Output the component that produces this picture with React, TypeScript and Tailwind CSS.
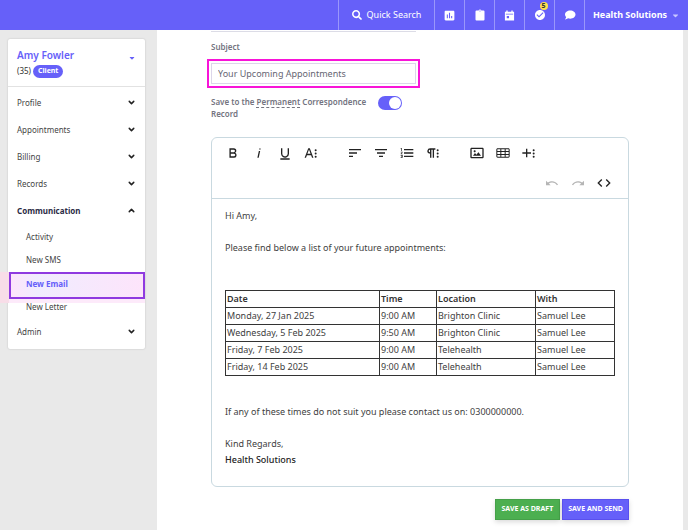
import React, { useState } from "react";
import { FaCaretDown, FaSearch } from "react-icons/fa";
import { MdAssessment, MdCheckCircle } from "react-icons/md";
import { ChevronDown, ChevronUp } from "lucide-react";

const DOTS =
  "M20.5,17.5a1.5,1.5,0,1,1-3,0a1.5,1.5,0,0,1,3,0ZM20.5,12.7a1.5,1.5,0,1,1-3,0a1.5,1.5,0,0,1,3,0ZM20.5,7.9a1.5,1.5,0,1,1-3,0a1.5,1.5,0,0,1,3,0Z";

const ICONS = {
  bold: "M15.25,11.8h0A3.68,3.68,0,0,0,17,9a3.93,3.93,0,0,0-3.86-4H6.65V19h7a3.74,3.74,0,0,0,3.7-3.78V15.1A3.64,3.64,0,0,0,15.25,11.8ZM8.65,7h4.2a2.09,2.09,0,0,1,2,1.3,2.09,2.09,0,0,1-1.37,2.61,2.23,2.23,0,0,1-.63.09H8.65Zm4.6,10H8.65V13h4.6a2.09,2.09,0,0,1,2,1.3,2.09,2.09,0,0,1-1.37,2.61A2.23,2.23,0,0,1,13.25,17Z",
  italic: "M11.76,9h2l-2.2,10h-2Zm1.68-4a1,1,0,1,0,1,1,1,1,0,0,0-1-1Z",
  underline:
    "M19,20v2H5V20Zm-3-6.785a4,4,0,0,1-5.74,3.4A3.75,3.75,0,0,1,8,13.085V5.005H6v8.21a6,6,0,0,0,8,5.44,5.851,5.851,0,0,0,4-5.65v-8H16Z",
  textMore:
    "M13.55,19h2.1L10.2,5H7.9L2.4,19h2.1l1.4-3.8h6.3ZM6.6,13.3L9,6.9l2.4,6.4Z" + DOTS,
  alignLeft: "M3,18h6v-2H3V18z M3,11v2h12v-2H3z M3,6v2h18V6H3z",
  alignCenter: "M9,18h6v-2H9V18z M6,11v2h12v-2H6z M3,6v2h18V6H3z",
  orderedList:
    "M2.5,16h2v.5h-1v1h1V18h-2v1h3V15h-3Zm1-7h1V5h-2V6h1Zm-1,2H4.3L2.5,13.1V14h3V13H3.7l1.8-2.1V10h-3Zm5-5V8h14V6Zm0,12h14V16H7.5Zm0-5h14V11H7.5Z",
  paragraph:
    "M7.682,5a4.11,4.11,0,0,0-4.07,3.18,4,4,0,0,0,3.11,4.725h0l.027.005a3.766,3.766,0,0,0,.82.09v6h2V7h2V19h2V7h2V5ZM5.532,9a2,2,0,0,1,2-2v4A2,2,0,0,1,5.532,9Z" +
    DOTS,
  image:
    "M14.2,11l3.8,5H6l3-3.9l2.1,2.7L14,11H14.2z M8.5,11c0.8,0,1.5-0.7,1.5-1.5S9.3,8,8.5,8S7,8.7,7,9.5C7,10.3,7.7,11,8.5,11z M22,6v12c0,1.1-0.9,2-2,2H4c-1.1,0-2-0.9-2-2V6c0-1.1,0.9-2,2-2h16C21.1,4,22,4.8,22,6z M20,8.8V6H4v12h16V8.8z",
  table:
    "M20,5H4C2.9,5,2,5.9,2,7v10c0,1.1,0.9,2,2,2h16c1.1,0,2-0.9,2-2V7C22,5.9,21.1,5,20,5z M9.5,13.5v-3h5v3H9.5z M14.5,15v2.5h-5V15H14.5z M9.5,9V6.5h5V9H9.5z M3.5,7c0-0.3,0.2-0.5,0.5-0.5h4V9H3.5V7z M3.5,10.5H8v3H3.5V10.5z M3.5,17v-2H8v2.5H4C3.7,17.5,3.5,17.3,3.5,17z M20.5,17c0,0.3-0.2,0.5-0.5,0.5h-4V15h4.5V17z M20.5,13.5H16v-3h4.5V13.5z M16,9V6.5h4c0.3,0,0.5,0.2,0.5,0.5v2H16z",
  plus: "M15,13H9.5v5.5h-2V13H2v-2h5.5V5.5h2V11H15Z" + DOTS,
  undo: "M10.4,9.4c-1.7,0.3-3.2,0.9-4.6,2L3,8.5v7h7l-2.7-2.7c3.7-2.6,8.8-1.8,11.5,1.9c0.2,0.3,0.4,0.5,0.5,0.8l1.8-0.9C18.9,10.8,14.7,8.7,10.4,9.4z",
  redo: "M13.6,9.4c1.7,0.3,3.2,0.9,4.6,2L21,8.5v7h-7l2.7-2.7C13,10.2,7.9,11,5.2,14.7c-0.2,0.3-0.4,0.5-0.5,0.8L2.9,14.6C5.1,10.8,9.3,8.7,13.6,9.4z",
  code: "M9.4,16.6,4.8,12,9.4,7.4,8,6,2,12l6,6Zm5.2,0L19.2,12,14.6,7.4,16,6l6,6-6,6Z",
};

type IconName = keyof typeof ICONS;

function Tool({ icon, label, disabled = false }: { icon: IconName; label: string; disabled?: boolean }) {
  return (
    <button
      type="button"
      aria-label={label}
      disabled={disabled}
      className="flex h-[30px] w-[26px] items-center justify-center text-[#222] disabled:text-[#b5b5b5]"
    >
      <svg viewBox="0 0 24 24" className="size-4" fill="currentColor" aria-hidden="true">
        <path fillRule="evenodd" d={ICONS[icon]} />
      </svg>
    </button>
  );
}

function TopButton({ label, children }: { label: string; children: React.ReactNode }) {
  return (
    <button
      type="button"
      aria-label={label}
      className="flex w-[30px] items-center justify-center border-l border-[#9a97fb]"
    >
      {children}
    </button>
  );
}

function TopBar() {
  return (
    <header className="flex h-[30px] shrink-0 justify-end bg-[#6660f9] text-[9px] text-white">
      <button
        type="button"
        className="flex w-24 items-center justify-center gap-[5px] border-l border-[#9a97fb]"
      >
        <FaSearch className="size-[10px]" />
        Quick Search
      </button>
      <TopButton label="Reports">
        <MdAssessment className="size-[13px]" />
      </TopButton>
      <TopButton label="Tasks">
        <svg viewBox="0 0 24 24" className="size-3" fill="currentColor" aria-hidden="true">
          <path d="M19 3h-4.2a3 3 0 0 0-5.6 0H5a2 2 0 0 0-2 2v16a2 2 0 0 0 2 2h14a2 2 0 0 0 2-2V5a2 2 0 0 0-2-2zm-8 0h2v2h-2z" />
        </svg>
      </TopButton>
      <TopButton label="Calendar">
        <svg viewBox="0 0 24 24" className="size-[11px]" fill="currentColor" aria-hidden="true">
          <path fillRule="evenodd" d="M5 1h3v3h8V1h3v3h3v19H2V4h3zM4 8v2h16V8zM6 13v5h5v-5z" />
        </svg>
      </TopButton>
      <TopButton label="Notifications, 5 new">
        <span className="relative">
          <MdCheckCircle className="size-3" />
          <span className="absolute -top-[7px] left-[6px] flex size-[8px] items-center justify-center rounded-full bg-[#ffe14d] text-[7px] font-bold text-[#333]">
            5
          </span>
        </span>
      </TopButton>
      <TopButton label="Messages">
        <svg viewBox="0 0 24 24" className="size-3" fill="currentColor" aria-hidden="true">
          <path d="M12.5 3C6.5 3 2 6.5 2 11c0 2 .9 3.8 2.4 5.2C4.2 18 3.2 19.6 1.5 21c2.7 0 5-.8 6.7-2.3 1.3.4 2.8.6 4.3.6C18.5 19.3 23 15.5 23 11s-4.5-8-10.5-8z" />
        </svg>
      </TopButton>
      <button
        type="button"
        className="flex w-[104px] items-center justify-center gap-1 border-l border-[#9a97fb] font-bold"
      >
        Health Solutions
        <FaCaretDown className="size-[9px] text-[#c9c7ff]" />
      </button>
    </header>
  );
}

function MenuItem({ label, open = false }: { label: string; open?: boolean }) {
  const Chevron = open ? ChevronUp : ChevronDown;
  return (
    <button
      type="button"
      aria-expanded={open}
      className={
        open
          ? "flex h-[27px] w-full items-center justify-between px-[9px] font-bold text-[#2b2b45]"
          : "flex h-[27px] w-full items-center justify-between px-[9px] text-[#444]"
      }
    >
      {label}
      <Chevron className="size-[9px] text-[#222]" strokeWidth={4} />
    </button>
  );
}

function SubItem({ label }: { label: string }) {
  return (
    <a href="#" className="flex h-[23px] items-center pl-[18px] text-[#444]">
      {label}
    </a>
  );
}

function Sidebar() {
  return (
    <aside className="w-[157px] shrink-0 overflow-hidden bg-[#e9e9e9] pt-[9px] pr-3 pl-2">
      <div className="rounded-[2px] bg-white pb-1 text-[8px] shadow-[0_0_2px_rgba(0,0,0,0.2)]">
        <div className="flex h-12 justify-between border-b border-[#e2e2e2] px-[9px] pt-[9px]">
          <div>
            <h1 className="text-[10px] leading-[15px] font-semibold text-[#6660f9]">Amy Fowler</h1>
            <div className="flex items-center gap-[2px] leading-[16px] text-[#333]">
              (35)
              <span className="flex h-[13px] items-center rounded-full bg-[#6660f9] px-[5px] text-[7px] font-bold text-white">
                Client
              </span>
            </div>
          </div>
          <button type="button" aria-label="Client menu" className="h-[19px] text-[#6660f9]">
            <FaCaretDown className="size-2" />
          </button>
        </div>
        <nav className="pt-[2px]">
          <MenuItem label="Profile" />
          <MenuItem label="Appointments" />
          <MenuItem label="Billing" />
          <MenuItem label="Records" />
          <MenuItem label="Communication" open />
          <div className="pt-px">
            <SubItem label="Activity" />
            <SubItem label="New SMS" />
            <a
              href="#"
              aria-current="page"
              className="mt-px ml-px flex h-[27px] items-center border-2 border-[#8f3ae0] bg-linear-to-r from-[#fde4fb] via-[#f0ecfe] via-20% to-[#fde4fb] pb-1 pl-[15px] font-bold text-[#6660f9] shadow-[0_4px_0_0_#fdeafa,-9px_4px_0_0_#f8dde8,-9px_0_0_0_#f8dde8]"
            >
              New Email
            </a>
            <div className="relative -mt-1">
              <SubItem label="New Letter" />
            </div>
          </div>
          <MenuItem label="Admin" />
        </nav>
      </div>
    </aside>
  );
}

const APPOINTMENTS = [
  ["Monday, 27 Jan 2025", "9:00 AM", "Brighton Clinic", "Samuel Lee"],
  ["Wednesday, 5 Feb 2025", "9:50 AM", "Brighton Clinic", "Samuel Lee"],
  ["Friday, 7 Feb 2025", "9:00 AM", "Telehealth", "Samuel Lee"],
  ["Friday, 14 Feb 2025", "9:00 AM", "Telehealth", "Samuel Lee"],
];

function Editor() {
  return (
    <section className="rounded-[6px] border border-[#c9d9e0]">
      <div role="toolbar" aria-label="Formatting" className="border-b border-[#c9d9e0] px-2">
        <div className="flex gap-[18px]">
          <div className="flex">
            <Tool icon="bold" label="Bold" />
            <Tool icon="italic" label="Italic" />
            <Tool icon="underline" label="Underline" />
            <Tool icon="textMore" label="More text" />
          </div>
          <div className="flex">
            <Tool icon="alignLeft" label="Align left" />
            <Tool icon="alignCenter" label="Align center" />
            <Tool icon="orderedList" label="Ordered list" />
            <Tool icon="paragraph" label="More paragraph" />
          </div>
          <div className="flex">
            <Tool icon="image" label="Insert image" />
            <Tool icon="table" label="Insert table" />
            <Tool icon="plus" label="More rich" />
          </div>
        </div>
        <div className="flex justify-end pr-[3px]">
          <Tool icon="undo" label="Undo" disabled />
          <Tool icon="redo" label="Redo" disabled />
          <Tool icon="code" label="Code view" />
        </div>
      </div>
      <div className="px-[13px] pt-[9px] pb-[18px] leading-[16px] text-[#414141]">
        <p>Hi Amy,</p>
        <p className="mt-4">Please find below a list of your future appointments:</p>
        <table className="mt-[34px] w-full table-fixed border-collapse border border-[#333] text-left">
          <colgroup>
            <col />
            <col className="w-[57px]" />
            <col className="w-[99px]" />
            <col className="w-[79px]" />
          </colgroup>
          <thead>
            <tr>
              {["Date", "Time", "Location", "With"].map((h) => (
                <th key={h} className="border border-[#333] px-px font-semibold text-[#333]">
                  {h}
                </th>
              ))}
            </tr>
          </thead>
          <tbody>
            {APPOINTMENTS.map((row) => (
              <tr key={row[0]}>
                {row.map((cell) => (
                  <td key={cell} className="border border-[#333] px-px">
                    {cell}
                  </td>
                ))}
              </tr>
            ))}
          </tbody>
        </table>
        <p className="mt-7">If any of these times do not suit you please contact us on: 0300000000.</p>
        <p className="mt-4">Kind Regards,</p>
        <p className="font-medium text-[#222]">Health Solutions</p>
      </div>
    </section>
  );
}

export default function App() {
  const [subject, setSubject] = useState("Your Upcoming Appointments");
  const [save, setSave] = useState(true);
  return (
    <div className="flex min-h-screen flex-col bg-[#e9e9e9] font-['Noto_Sans','Open_Sans',sans-serif]">
      <TopBar />
      <div className="flex grow">
        <Sidebar />
        <main className="mr-[5px] min-w-0 grow bg-white px-[54px] text-[9px]">
          <div className="h-[2px] w-[205px] border-b border-[#dcdce6]" />
          <label
            htmlFor="subject"
            className="mt-[9px] block text-[8px] leading-[12px] font-semibold text-[#74747f]"
          >
            Subject
          </label>
          <div className="-mx-1 mt-[6px] w-[213px] border-2 border-[#f814d8] p-[2px]">
            <input
              id="subject"
              type="text"
              value={subject}
              onChange={(e) => setSubject(e.target.value)}
              className="block h-[21px] w-full border border-[#dcd6ea] bg-white px-[6px] text-[#666673] outline-none"
            />
          </div>
          <div className="mt-2 flex items-start gap-[2px]">
            <label
              htmlFor="save-record"
              className="w-[165px] text-[8px] leading-[12px] font-semibold text-[#74747f]"
            >
              Save to the{" "}
              <abbr className="underline decoration-dashed decoration-1 underline-offset-2">Permanent</abbr>{" "}
              Correspondence Record
            </label>
            <span className="relative flex h-[14px] w-6">
              <input
                id="save-record"
                type="checkbox"
                role="switch"
                checked={save}
                onChange={(e) => setSave(e.target.checked)}
                className="peer h-full w-full appearance-none rounded-full bg-[#b9b9c4] checked:bg-[#6660f9]"
              />
              <span className="pointer-events-none absolute top-px left-px size-3 rounded-full bg-white peer-checked:left-[11px]" />
            </span>
          </div>
          <div className="mt-[17px]">
            <Editor />
          </div>
          <div className="mt-3 flex justify-end gap-[2px] text-[7px] font-bold text-white">
            <button
              type="button"
              className="h-[21px] border border-[#45a049] bg-[#4caf50] px-[6px] shadow-[0_2px_5px_rgba(0,0,0,0.15)]"
            >
              SAVE AS DRAFT
            </button>
            <button
              type="button"
              className="h-[21px] border border-[#5a50ee] bg-[#6660f9] px-[5px] shadow-[0_2px_5px_rgba(0,0,0,0.15)]"
            >
              SAVE AND SEND
            </button>
          </div>
        </main>
      </div>
    </div>
  );
}
